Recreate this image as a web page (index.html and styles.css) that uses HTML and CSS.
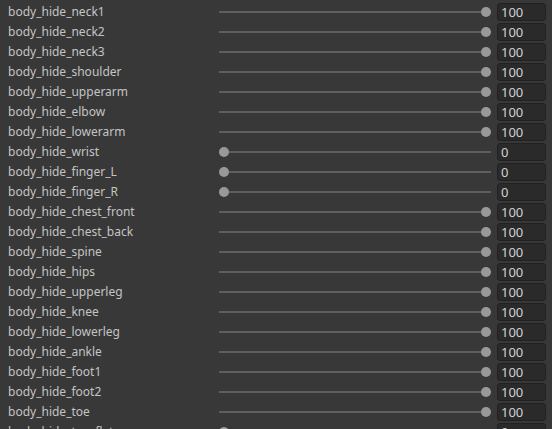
FILE: index.html
```html
<!DOCTYPE html>
<html>
<head>
<meta charset="utf-8">
<link rel="stylesheet" href="styles.css">
</head>
<body>
<div class="list">
  <div class="row"><span class="label">body_hide_neck1</span><div class="slider"><div class="track"></div><div class="knob" style="--v:1"></div></div><div class="field">100</div></div>
  <div class="row"><span class="label">body_hide_neck2</span><div class="slider"><div class="track"></div><div class="knob" style="--v:1"></div></div><div class="field">100</div></div>
  <div class="row"><span class="label">body_hide_neck3</span><div class="slider"><div class="track"></div><div class="knob" style="--v:1"></div></div><div class="field">100</div></div>
  <div class="row"><span class="label">body_hide_shoulder</span><div class="slider"><div class="track"></div><div class="knob" style="--v:1"></div></div><div class="field">100</div></div>
  <div class="row"><span class="label">body_hide_upperarm</span><div class="slider"><div class="track"></div><div class="knob" style="--v:1"></div></div><div class="field">100</div></div>
  <div class="row"><span class="label">body_hide_elbow</span><div class="slider"><div class="track"></div><div class="knob" style="--v:1"></div></div><div class="field">100</div></div>
  <div class="row"><span class="label">body_hide_lowerarm</span><div class="slider"><div class="track"></div><div class="knob" style="--v:1"></div></div><div class="field">100</div></div>
  <div class="row"><span class="label">body_hide_wrist</span><div class="slider"><div class="track"></div><div class="knob" style="--v:0"></div></div><div class="field">0</div></div>
  <div class="row"><span class="label">body_hide_finger_L</span><div class="slider"><div class="track"></div><div class="knob" style="--v:0"></div></div><div class="field">0</div></div>
  <div class="row"><span class="label">body_hide_finger_R</span><div class="slider"><div class="track"></div><div class="knob" style="--v:0"></div></div><div class="field">0</div></div>
  <div class="row"><span class="label">body_hide_chest_front</span><div class="slider"><div class="track"></div><div class="knob" style="--v:1"></div></div><div class="field">100</div></div>
  <div class="row"><span class="label">body_hide_chest_back</span><div class="slider"><div class="track"></div><div class="knob" style="--v:1"></div></div><div class="field">100</div></div>
  <div class="row"><span class="label">body_hide_spine</span><div class="slider"><div class="track"></div><div class="knob" style="--v:1"></div></div><div class="field">100</div></div>
  <div class="row"><span class="label">body_hide_hips</span><div class="slider"><div class="track"></div><div class="knob" style="--v:1"></div></div><div class="field">100</div></div>
  <div class="row"><span class="label">body_hide_upperleg</span><div class="slider"><div class="track"></div><div class="knob" style="--v:1"></div></div><div class="field">100</div></div>
  <div class="row"><span class="label">body_hide_knee</span><div class="slider"><div class="track"></div><div class="knob" style="--v:1"></div></div><div class="field">100</div></div>
  <div class="row"><span class="label">body_hide_lowerleg</span><div class="slider"><div class="track"></div><div class="knob" style="--v:1"></div></div><div class="field">100</div></div>
  <div class="row"><span class="label">body_hide_ankle</span><div class="slider"><div class="track"></div><div class="knob" style="--v:1"></div></div><div class="field">100</div></div>
  <div class="row"><span class="label">body_hide_foot1</span><div class="slider"><div class="track"></div><div class="knob" style="--v:1"></div></div><div class="field">100</div></div>
  <div class="row"><span class="label">body_hide_foot2</span><div class="slider"><div class="track"></div><div class="knob" style="--v:1"></div></div><div class="field">100</div></div>
  <div class="row"><span class="label">body_hide_toe</span><div class="slider"><div class="track"></div><div class="knob" style="--v:1"></div></div><div class="field">100</div></div>
  <div class="row"><span class="label">body_hide_toe_flat</span><div class="slider"><div class="track"></div><div class="knob" style="--v:0"></div></div><div class="field">0</div></div>
</div>
</body>
</html>
```
FILE: styles.css
```css
html, body {
  margin: 0;
  padding: 0;
  background: #383838;
  overflow: hidden;
}
body {
  font-family: "Noto Sans", "Open Sans", sans-serif;
  font-size: 12px;
  color: #c4c4c4;
}
.list {
  padding-top: 2px;
  display: flex;
  flex-direction: column;
}
.row {
  height: 20px;
  display: grid;
  grid-template-columns: 205px 272px 49px;
  column-gap: 6px;
  padding-left: 8px;
  align-items: center;
}
.label {
  white-space: nowrap;
  overflow: hidden;
  line-height: 20px;
}
.slider {
  position: relative;
  height: 20px;
  display: flex;
  align-items: center;
}
.track {
  width: 100%;
  height: 2px;
  background: #5e5e5e;
}
.knob {
  position: absolute;
  top: 5px;
  left: calc((100% - 10px) * var(--v));
  width: 10px;
  height: 10px;
  border-radius: 50%;
  background: #999999;
}
.field {
  box-sizing: border-box;
  height: 18px;
  background: #2a2a2a;
  border: 1px solid #212121;
  border-radius: 3px;
  padding-left: 3px;
  font-size: 13px;
  line-height: 16px;
  color: #d2d2d2;
}
```
